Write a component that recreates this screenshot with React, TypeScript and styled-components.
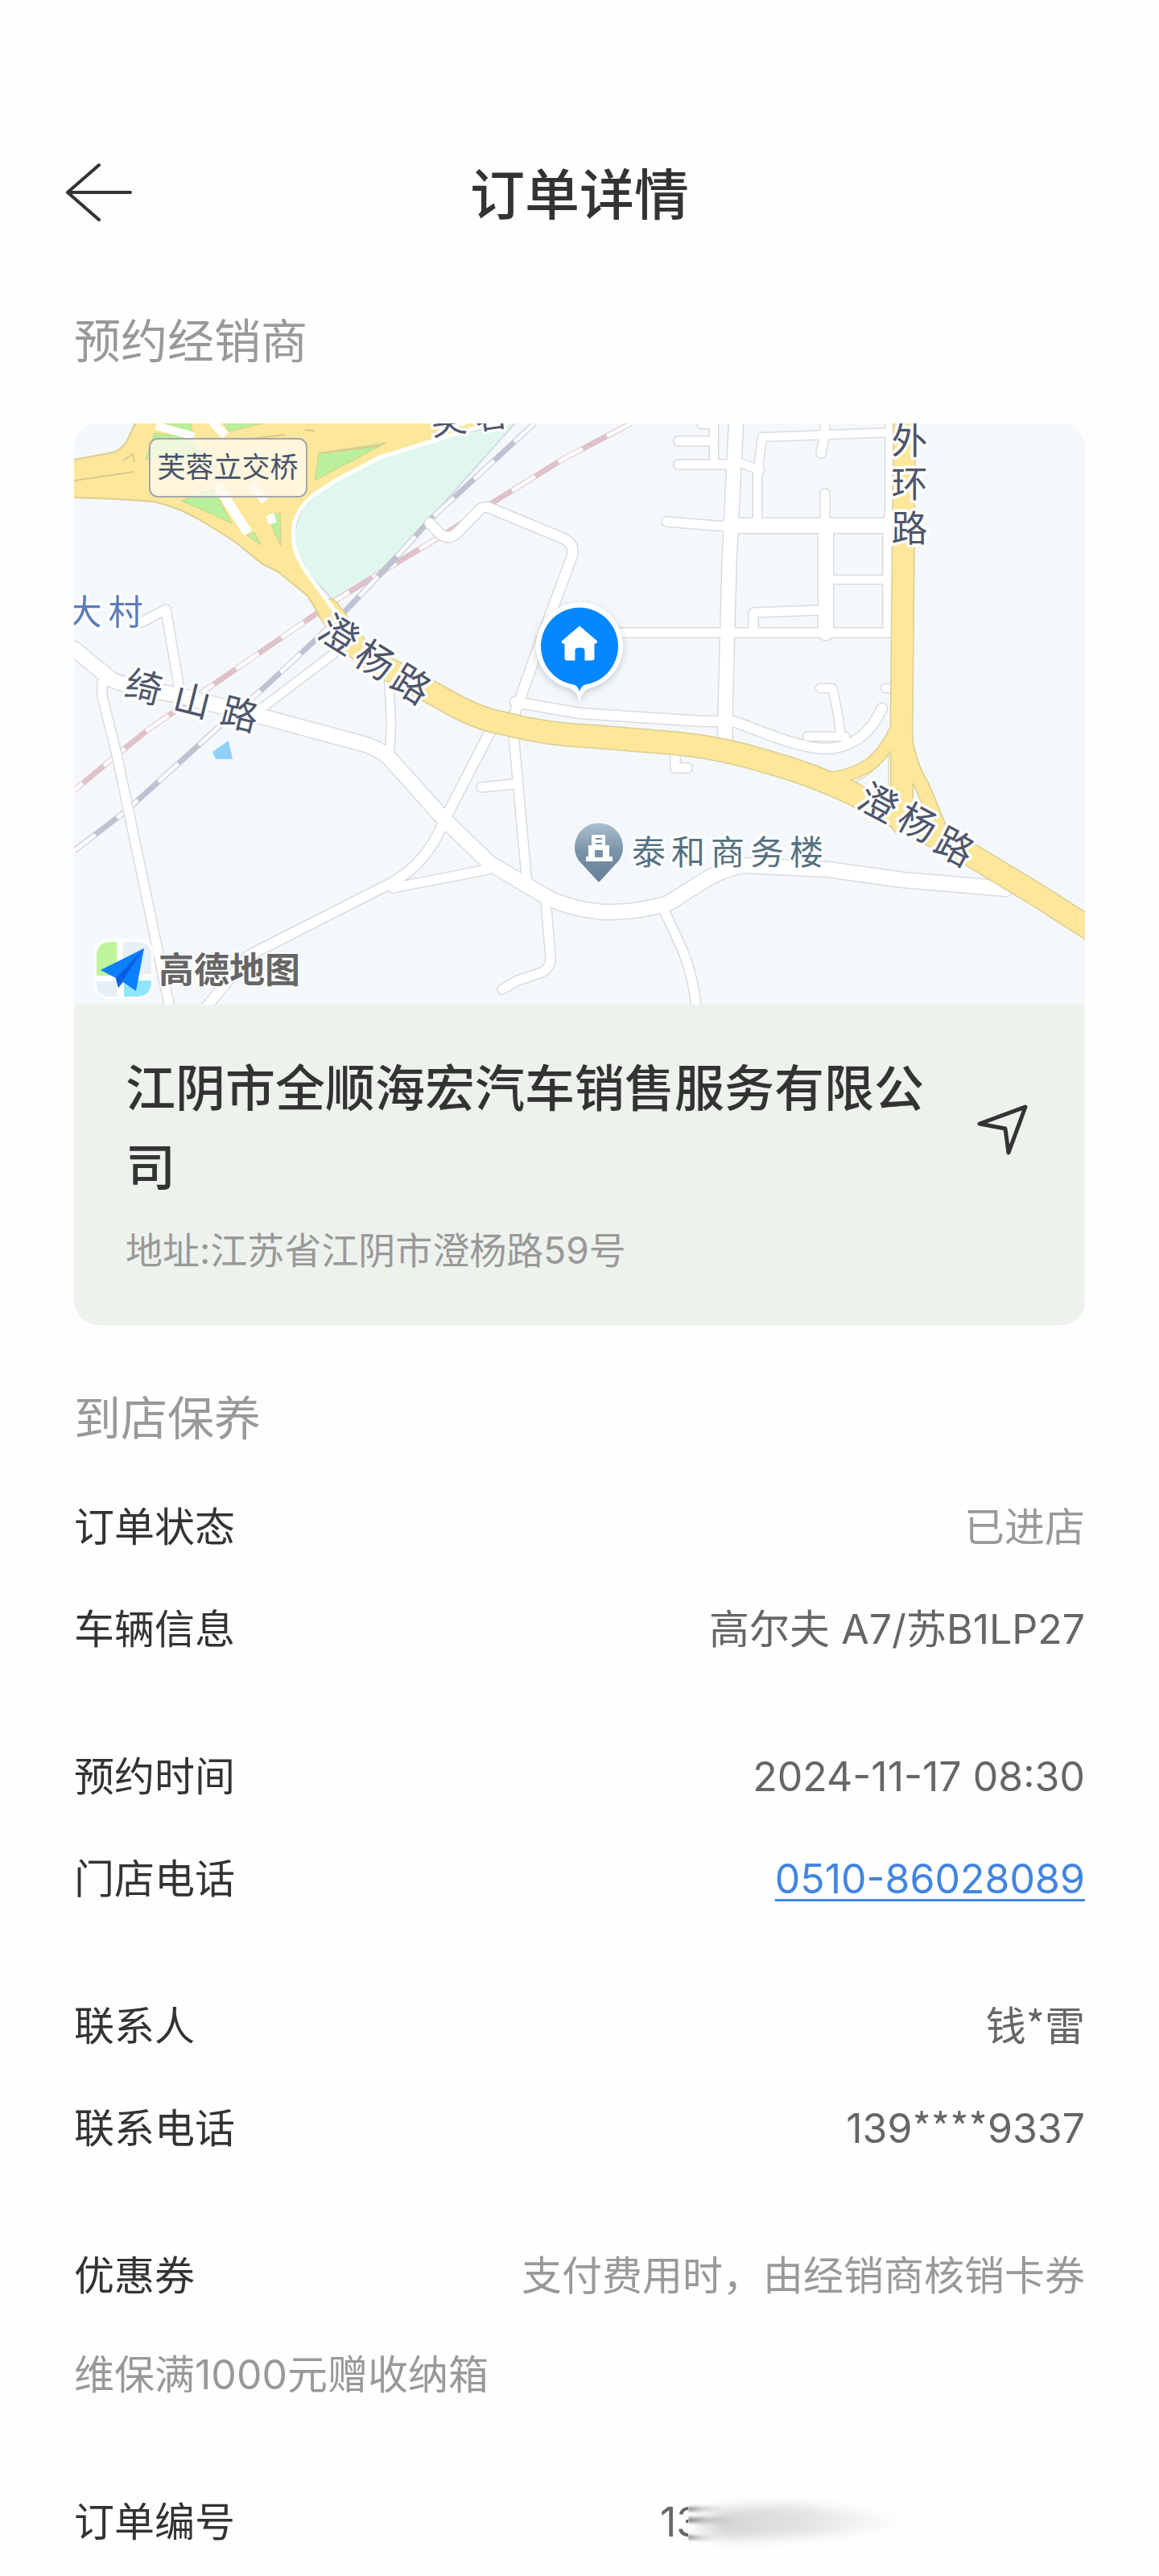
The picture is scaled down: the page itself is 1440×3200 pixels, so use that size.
import React from "react";
import styled, { createGlobalStyle } from "styled-components";

const GlobalStyle = createGlobalStyle`
  * { box-sizing: border-box; }
  body { margin: 0; background: #fefefe; }
`;

const Page = styled.main`
  padding: 190px 92px 32px;
  font-family: Inter, "Noto Sans CJK SC", sans-serif;
  font-size: 50px;
  line-height: 70px;
  color: #333;
`;

const Header = styled.header`
  display: grid;
  grid-template-columns: 100px 1fr 100px;
  align-items: center;
  margin-bottom: 90px;
`;

const IconButton = styled.button`
  flex: none;
  display: flex;
  width: 72px;
  height: 72px;
  padding: 0;
  border: 0;
  background: none;
  color: #333;
  cursor: pointer;
`;

const BackButton = styled(IconButton)`
  width: 84px;
  height: 80px;
  margin-left: -12px;
`;

const Title = styled.h1`
  margin: 0;
  font-size: 68px;
  line-height: 104px;
  font-weight: 500;
  text-align: center;
`;

const SectionTitle = styled.h2`
  margin: 0;
  font-size: 58px;
  line-height: 80px;
  font-weight: 400;
  color: #999;
`;

const DealerCard = styled.article`
  margin: 62px 0 76px;
  border-radius: 30px;
  overflow: hidden;
  background: #eef2ed;
`;

const MapView = styled.svg`
  display: block;
  width: 100%;
  height: auto;
  font-family: "Noto Sans CJK SC", sans-serif;
`;

const DealerInfo = styled.div`
  padding: 56px 66px 62px 64px;
`;

const NameRow = styled.div`
  display: flex;
  align-items: center;
  justify-content: space-between;
  gap: 40px;
`;

const DealerName = styled.h3`
  margin: 0;
  font-size: 62px;
  line-height: 98px;
  font-weight: 500;
`;

const Address = styled.p`
  margin: 22px 0 0;
  font-size: 46px;
  line-height: 62px;
  color: #999;
`;

const Details = styled.div`
  display: flex;
  flex-direction: column;
  gap: 113px;
  margin-top: 60px;
`;

const Group = styled.dl<{ $gap?: number }>`
  display: flex;
  flex-direction: column;
  gap: ${(p) => p.$gap ?? 57}px;
  margin: 0;
`;

const Row = styled.div`
  display: flex;
  justify-content: space-between;
`;

const Label = styled.dt``;

const Value = styled.dd<{ $muted?: boolean }>`
  margin: 0;
  color: ${(p) => (p.$muted ? "#999" : "#666")};
`;

const Mask = styled.span`
  font-family: "Noto Sans CJK SC", sans-serif;
  line-height: 1;
`;

const PhoneLink = styled.a`
  color: #4285e0;
  text-decoration: underline;
  text-decoration-thickness: 3px;
  text-underline-offset: 7px;
`;

const HiddenNumber = styled.dd`
  position: relative;
  width: 528px;
  margin: 0;
  color: #666;
`;

const Smear = styled.svg`
  position: absolute;
  left: 35px;
  top: -5px;
  width: 300px;
  height: 90px;
`;

const ROAD = { edge: "#d9dbe0", fill: "#ffffff" };
const MAIN = { edge: "#dccd92", fill: "#fce79b" };

const streets: [number, string][] = [
  [11, "M176 773L206 757L223 857"],
  [18, "M92 806L137 843Q145 850 223 864L325 890L447 923Q470 928 484 942L553 1019L608 1072L672 1110Q700 1128 750 1133Q790 1134 830 1122C860 1105 885 1082 923 1075L1028 1080L1121 1093L1250 1104"],
  [11, "M127 848V865L145 937L211 1252"],
  [10, "M482 820L486 900L484 935"],
  [12, "M534 650L549 665Q560 671 570 660L596 633Q602 628 611 632L700 669Q714 675 711 690L684 763L637 893L611 905L553 1017C540 1050 520 1080 480 1100L309 1187L245 1265"],
  [11, "M488 1103L607 1080"],
  [11, "M637 900L655 1100"],
  [11, "M598 978L639 974"],
  [11, "M678 1118L684 1190Q684 1203 673 1208L643 1218L624 1229"],
  [11, "M826 1133L848 1180Q862 1215 865 1252"],
  [10, "M420 808L325 880"],
  [12, "M640 872L720 886L872 896L910 896C940 905 970 921 1003 927C1050 938 1080 915 1096 880"],
  [10, "M1019 855H1034Q1041 880 1044 912"],
  [10, "M1003 915L1050 915"],
  [10, "M1100 855L1112 855"],
  [11, "M839 930V954H854"],
  [17, "M915 516L906 700L901 893V926"],
  [11, "M760 786H1108"],
  [11, "M828 648L902 654"],
  [18, "M905 653H1110"],
  [10, "M887 516V577"],
  [11, "M843 548H887"],
  [11, "M843 577H915"],
  [10, "M872 527H887"],
  [10, "M915 573L944 584"],
  [10, "M1110 537L947 543L941 590V650"],
  [11, "M1025 516V540L1020 563"],
  [11, "M1025 613V650"],
  [18, "M1026 655V786"],
  [10, "M1028 720H1105"],
  [11, "M1020 758L936 761V786"],
  [11, "M1106 516V630L1103 660V786"],
];

const mainRoads: [number, string][] = [
  [26, "M1124 500L1120 910L1121 1023"],
  [14, "M1114 905C1095 945 1075 962 1025 968"],
  [16, "M1125 920Q1132 955 1145 975L1170 1035"],
  [27, "M408 758L435 795Q455 818 488 834L570 879Q600 894 623 898Q680 913 740 915L847 924Q900 930 952 946Q1010 962 1062 987L1130 1023L1208 1063L1289 1112L1370 1164"],
];

const greenAreas = [
  "M198 526H237L240 540L196 532Z",
  "M278 526H327L284 536Z",
  "M192 538L240 543L250 570H181Z",
  "M396 563L480 550L391 597Z",
  "M225 622L265 607L288 650Z",
  "M330 640L348 637L349 678L337 652Z",
  "M307 665L316 661L325 677Z",
];

function RoadNet({ roads, tone }: { roads: [number, string][]; tone: typeof ROAD }) {
  return (
    <g fill="none" strokeLinecap="round" strokeLinejoin="round">
      {roads.map(([w, d]) => (
        <path key={d} d={d} stroke={tone.edge} strokeWidth={w + 3} />
      ))}
      {roads.map(([w, d]) => (
        <path key={d} d={d} stroke={tone.fill} strokeWidth={w} />
      ))}
    </g>
  );
}

function Railway({ d, color }: { d: string; color: string }) {
  return (
    <g fill="none">
      <path d={d} stroke={color} strokeWidth="7" />
      <path d={d} stroke="#fcfcfe" strokeWidth="5" strokeDasharray="34 34" />
    </g>
  );
}

type MapTextProps = {
  chars: [string, number, number][];
  size: number;
  color?: string;
  rotate?: number;
};

function MapText({ chars, size, color = "#4e566b", rotate = 0 }: MapTextProps) {
  return (
    <g fontSize={size} fill={color} stroke="#fff" strokeWidth="7" strokeLinejoin="round" paintOrder="stroke" textAnchor="middle">
      {chars.map(([c, x, y]) => (
        <text key={c} y={Math.round(size * 0.37)} transform={`translate(${x} ${y}) rotate(${rotate})`}>
          {c}
        </text>
      ))}
    </g>
  );
}

function DealerMap() {
  const rail = "M664 526L537 643L488 697L431 757L394 793L325 857L264 910L157 1007L92 1057";
  const metro = "M784 526L700 570L611 625L558 660L480 707L415 747L382 770L251 860L182 908L151 933L92 982";
  return (
    <MapView viewBox="92 526 1256 722" role="img" aria-label="经销商位置地图">
      <defs>
        <linearGradient id="poi" x1="0" y1="0" x2="0" y2="1">
          <stop offset="0" stopColor="#a9c0ce" />
          <stop offset="0.5" stopColor="#7a92a6" />
          <stop offset="1" stopColor="#65809a" />
        </linearGradient>
        <filter id="pinShadow" x="-30%" y="-30%" width="160%" height="160%">
          <feDropShadow dx="0" dy="3" stdDeviation="5" floodColor="#6b7280" floodOpacity="0.35" />
        </filter>
      </defs>
      <rect x="92" y="526" width="1256" height="722" fill="#f5f8fb" />
      <path
        d="M645 520L590 535L537 545L472 568L419 595Q394 609 376 632Q360 660 370 690L386 715L415 747L474 707L529 650Z"
        fill="#e0f7ee"
        stroke="#cfdbe6"
        strokeWidth="2"
      />
      <Railway d={metro} color="#dfc1c9" />
      <Railway d={rail} color="#bfc3d1" />
      <RoadNet roads={streets} tone={ROAD} />
      <path d="M284 920L289 943H268L264 934Z" fill="#91d0fd" />

      <RoadNet roads={mainRoads} tone={MAIN} />
      <path
        d="M92 571L141 562Q152 558 158 547L171 520H620L560 540L472 567L415 597L386 617Q364 640 365 660Q362 680 382 713L419 757L440 788L420 797L404 777L382 740L345 710L325 700L292 673L260 653Q225 630 190 623L145 620L92 618Z"
        fill={MAIN.fill}
      />
      <path
        d="M92 571L141 562Q152 558 158 547L171 520M92 618L145 620L190 623Q225 630 260 653L292 673L325 700L345 710L382 740L398 766"
        fill="none"
        stroke={MAIN.edge}
        strokeWidth="2"
      />
      <path d="M620 523L560 541L472 568L417 597L388 616Q362 640 365 663Q362 685 384 715L418 762" fill="none" stroke="#fff" strokeWidth="5" />
      <path d="M1063 971Q1082 964 1104 938V990L1085 984Z" fill="#f5f8fb" stroke={MAIN.edge} strokeWidth="1" />
      {greenAreas.map((d) => (
        <path key={d} d={d} fill="#b8f09b" stroke="#d6cc8c" strokeWidth="1" />
      ))}
      <g fill="none" stroke="#fff">
        <path d="M194 529L241 542" strokeWidth="10" />
        <path d="M264 524L280 541" strokeWidth="11" />
        <path d="M270 603L308 662" strokeWidth="12" />
        <path d="M313 603L329 623" strokeWidth="10" />
        <path d="M332 646L342 643" strokeWidth="12" />
      </g>
      <g fill="none" stroke="#d9c98b" strokeWidth="2">
        <path d="M92 597L167 586M153 572L165 564L167 574" />
        <path d="M295 547L354 540M379 534L391 535M472 554L396 563" />
      </g>

      <rect x="186" y="545" width="195" height="72" rx="10" fill="#fffaf0" fillOpacity="0.78" stroke="#a3a6ad" strokeWidth="2" />
      <text x="283" y="593" fontSize="35" fill="#46536a" textAnchor="middle">芙蓉立交桥</text>

      <MapText size={44} rotate={-8} chars={[["芙", 557, 522], ["蓉", 611, 515]]} />
      <MapText size={43} color="#5c7bb8" chars={[["大", 105, 760], ["村", 156, 760]]} />
      <MapText size={46} rotate={14} chars={[["绮", 179, 853], ["山", 239, 870], ["路", 298, 887]]} />
      <MapText size={47} rotate={32} chars={[["澄", 421, 788], ["杨", 466, 820], ["路", 511, 850]]} />
      <MapText size={47} rotate={28} chars={[["澄", 1091, 997], ["杨", 1140, 1022], ["路", 1186, 1052]]} />
      <MapText size={45} chars={[["外", 1130, 547], ["环", 1130, 601], ["路", 1130, 656]]} />
      <MapText
        size={42}
        color="#557180"
        chars={[["泰", 806, 1058], ["和", 855, 1058], ["商", 904, 1058], ["务", 953, 1058], ["楼", 1002, 1058]]}
      />

      <path d="M744 1096L719 1069A30 30 0 1 1 769 1069Z" fill="url(#poi)" />
      <path d="M735 1037H752V1050H757V1064H761V1070H728V1064H731V1050H735Z" fill="#fff" />
      <path d="M740 1042H748M740 1048H748M740 1064V1057H748V1064Z" fill="#7a92a6" stroke="#7a92a6" strokeWidth="2" />

      <g filter="url(#pinShadow)">
        <path d="M720 872Q717 858 708 855A54 54 0 1 1 732 855Q723 858 720 872Z" fill="#fff" />
      </g>
      <path d="M720 859Q718 851 711 850A48 48 0 1 1 729 850Q722 851 720 859Z" fill="#0587ff" />
      <path
        d="M720 778L741 796Q743 799 739 799H738V818Q738 820 735 820H727V808Q727 804 720 804Q714 804 714 808V820H704Q702 820 702 818V799H700Q697 799 699 796Z"
        fill="#fff"
        stroke="#fff"
        strokeLinejoin="round"
      />

      <rect x="117" y="1166" width="74" height="75" rx="18" fill="#fff" fillOpacity="0.85" />
      <path d="M138 1170H145V1212H120V1188Q120 1170 138 1170Z" fill="#bff59b" />
      <path d="M153 1170H170Q188 1170 188 1188V1210H153Z" fill="#e6f0f6" />
      <path d="M120 1219H145V1238H138Q120 1238 120 1222Z" fill="#e6f0f6" />
      <path d="M154 1218H188Q188 1238 170 1238H154Z" fill="#8fe6ff" />
      <path d="M179 1178L125 1205L144 1215L147 1227L153 1220L169 1231Z" fill="#0a80ff" />
      <path d="M179 1178L144 1215L147 1227L152 1219Z" fill="#0a5fe0" />
      <text x="197" y="1221" fontSize="44" fontWeight="700" fill="#666" stroke="#fff" strokeWidth="3" paintOrder="stroke">高德地图</text>
    </MapView>
  );
}

export default function App() {
  return (
    <Page lang="zh-CN">
      <GlobalStyle />
      <Header>
        <BackButton type="button" aria-label="返回">
          <svg width="84" height="80" viewBox="0 0 84 80" fill="none" stroke="currentColor" strokeWidth="4" strokeLinecap="round" strokeLinejoin="round">
            <path d="M82 37H4M43 3L4 37L43 71" />
          </svg>
        </BackButton>
        <Title>订单详情</Title>
      </Header>

      <SectionTitle>预约经销商</SectionTitle>
      <DealerCard>
        <DealerMap />
        <DealerInfo>
          <NameRow>
            <DealerName>江阴市全顺海宏汽车销售服务有限公司</DealerName>
            <IconButton type="button" aria-label="导航">
              <svg width="72" height="72" viewBox="0 0 72 72" fill="none" stroke="currentColor" strokeWidth="5" strokeLinejoin="round">
                <path d="M64 9L7 30L39 36L43 66Z" />
              </svg>
            </IconButton>
          </NameRow>
          <Address>地址:江苏省江阴市澄杨路59号</Address>
        </DealerInfo>
      </DealerCard>

      <SectionTitle>到店保养</SectionTitle>
      <Details>
        <Group>
          <Row>
            <Label>订单状态</Label>
            <Value $muted>已进店</Value>
          </Row>
          <Row>
            <Label>车辆信息</Label>
            <Value>高尔夫 A7/苏B1LP27</Value>
          </Row>
        </Group>
        <Group>
          <Row>
            <Label>预约时间</Label>
            <Value>2024-11-17 08:30</Value>
          </Row>
          <Row>
            <Label>门店电话</Label>
            <Value>
              <PhoneLink href="tel:0510-86028089">0510-86028089</PhoneLink>
            </Value>
          </Row>
        </Group>
        <Group>
          <Row>
            <Label>联系人</Label>
            <Value>
              钱<Mask>*</Mask>雷
            </Value>
          </Row>
          <Row>
            <Label>联系电话</Label>
            <Value>
              139<Mask>****</Mask>9337
            </Value>
          </Row>
        </Group>
        <Group $gap={53}>
          <Row>
            <Label>优惠券</Label>
            <Value $muted>支付费用时，由经销商核销卡券</Value>
          </Row>
          <Row>
            <Value $muted>维保满1000元赠收纳箱</Value>
          </Row>
        </Group>
        <Group>
          <Row>
            <Label>订单编号</Label>
            <HiddenNumber>
              13
              <Smear viewBox="0 0 300 90" aria-hidden="true">
                <defs>
                  <linearGradient id="fade" x1="0" x2="300" y1="0" y2="0" gradientUnits="userSpaceOnUse">
                    <stop offset="0" stopColor="#aaa" stopOpacity="0.1" />
                    <stop offset="0.15" stopColor="#aaa" stopOpacity="0.6" />
                    <stop offset="0.5" stopColor="#bbb" stopOpacity="0.5" />
                    <stop offset="1" stopColor="#ddd" stopOpacity="0" />
                  </linearGradient>
                  <linearGradient id="streak" x1="0" x2="1" y1="0" y2="0">
                    <stop offset="0" stopColor="#555" stopOpacity="0.9" />
                    <stop offset="0.4" stopColor="#888" stopOpacity="0.4" />
                    <stop offset="1" stopColor="#aaa" stopOpacity="0" />
                  </linearGradient>
                  <filter id="soft" x="-10%" y="-50%" width="120%" height="200%">
                    <feGaussianBlur stdDeviation="3 7" />
                  </filter>
                  <filter id="tip" x="-10%" y="-100%" width="120%" height="300%">
                    <feGaussianBlur stdDeviation="1 2" />
                  </filter>
                </defs>
                <rect width="300" height="90" fill="#fefefe" />
                <path d="M8 36Q60 14 150 20Q240 28 280 40Q200 56 100 60Q40 64 8 54Z" fill="url(#fade)" filter="url(#soft)" opacity="0.8" />
                <g fill="url(#streak)" filter="url(#tip)">
                  <path d="M0 22L50 19V27L0 26Z" />
                  <path d="M0 35L60 32V43L0 40Z" />
                  <path d="M0 57L40 57V63L0 61Z" />
                </g>
              </Smear>
            </HiddenNumber>
          </Row>
        </Group>
      </Details>
    </Page>
  );
}
